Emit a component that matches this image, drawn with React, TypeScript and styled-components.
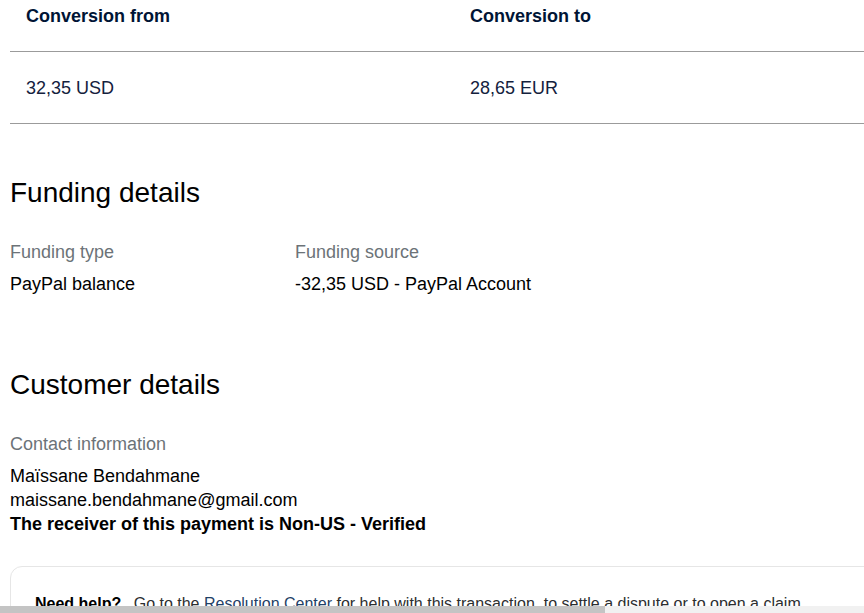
import React from "react";
import styled, { createGlobalStyle } from "styled-components";

const Global = createGlobalStyle`
  html, body {
    margin: 0;
    padding: 0;
    background: #ffffff;
    overflow: hidden;
  }
  body {
    font-family: "Liberation Sans", Arial, sans-serif;
    color: #000;
  }
`;

const Page = styled.div`
  width: 900px;
  padding-left: 10px;
  box-sizing: border-box;
`;

const Table = styled.div`
  display: grid;
  grid-template-columns: 444px 444px;
`;

const HeadCell = styled.div`
  height: 52px;
  box-sizing: border-box;
  padding: 5px 16px 0;
  font-size: 18px;
  line-height: 22px;
  font-weight: 700;
  color: #001435;
  border-bottom: 1px solid #9b9b9b;
`;

const BodyCell = styled.div`
  height: 72px;
  box-sizing: border-box;
  padding: 2px 16px 0;
  display: flex;
  align-items: center;
  font-size: 18px;
  color: #14213d;
  border-bottom: 1px solid #9b9b9b;
`;

const Heading = styled.h2<{ $top: number }>`
  margin: ${(p) => p.$top}px 0 29px;
  font-size: 28px;
  line-height: 36px;
  font-weight: 400;
  color: #000;
`;

const FieldGrid = styled.div`
  display: grid;
  grid-template-columns: 285px 285px;
`;

const Field = styled.div`
  display: flex;
  flex-direction: column;
  gap: 8px;
`;

const Label = styled.div`
  font-size: 18px;
  line-height: 24px;
  color: #6c7378;
`;

const Value = styled.div<{ $bold?: boolean }>`
  font-size: 18px;
  line-height: 24px;
  color: #000;
  font-weight: ${(p) => (p.$bold ? 700 : 400)};
`;

const Lines = styled.div`
  display: flex;
  flex-direction: column;
`;

const HelpCard = styled.div`
  margin-top: 30px;
  width: 880px;
  border: 1px solid #e6e6e6;
  border-radius: 12px;
  padding: 25px 24px 24px;
  box-sizing: border-box;
  font-size: 16px;
  line-height: 24px;
  color: #2c2e2f;
`;

const Strong = styled.span`
  font-weight: 700;
  color: #000;
  margin-right: 8px;
`;

const Link = styled.a`
  color: #1f3f66;
  text-decoration: none;
`;

const ScrollTrack = styled.div`
  position: fixed;
  left: 0;
  right: 0;
  bottom: 0;
  height: 7px;
  background: #f1f1f1;
`;

const ScrollThumb = styled.div`
  height: 100%;
  width: 605px;
  background: #c4c4c4;
`;

export default function App() {
  return (
    <>
      <Global />
      <Page>
        <Table>
          <HeadCell>Conversion from</HeadCell>
          <HeadCell>Conversion to</HeadCell>
          <BodyCell>32,35 USD</BodyCell>
          <BodyCell>28,65 EUR</BodyCell>
        </Table>

        <Heading $top={51}>Funding details</Heading>
        <FieldGrid>
          <Field>
            <Label>Funding type</Label>
            <Value>PayPal balance</Value>
          </Field>
          <Field>
            <Label>Funding source</Label>
            <Value>-32,35 USD - PayPal Account</Value>
          </Field>
        </FieldGrid>

        <Heading $top={71}>Customer details</Heading>
        <Field>
          <Label>Contact information</Label>
          <Lines>
            <Value>Maïssane Bendahmane</Value>
            <Value>maissane.bendahmane@gmail.com</Value>
            <Value $bold>The receiver of this payment is Non-US - Verified</Value>
          </Lines>
        </Field>

        <HelpCard>
          <Strong>Need help?</Strong> Go to the <Link href="#">Resolution Center</Link> for help with this transaction, to settle a dispute or to open a claim.
        </HelpCard>
      </Page>
      <ScrollTrack>
        <ScrollThumb />
      </ScrollTrack>
    </>
  );
}
